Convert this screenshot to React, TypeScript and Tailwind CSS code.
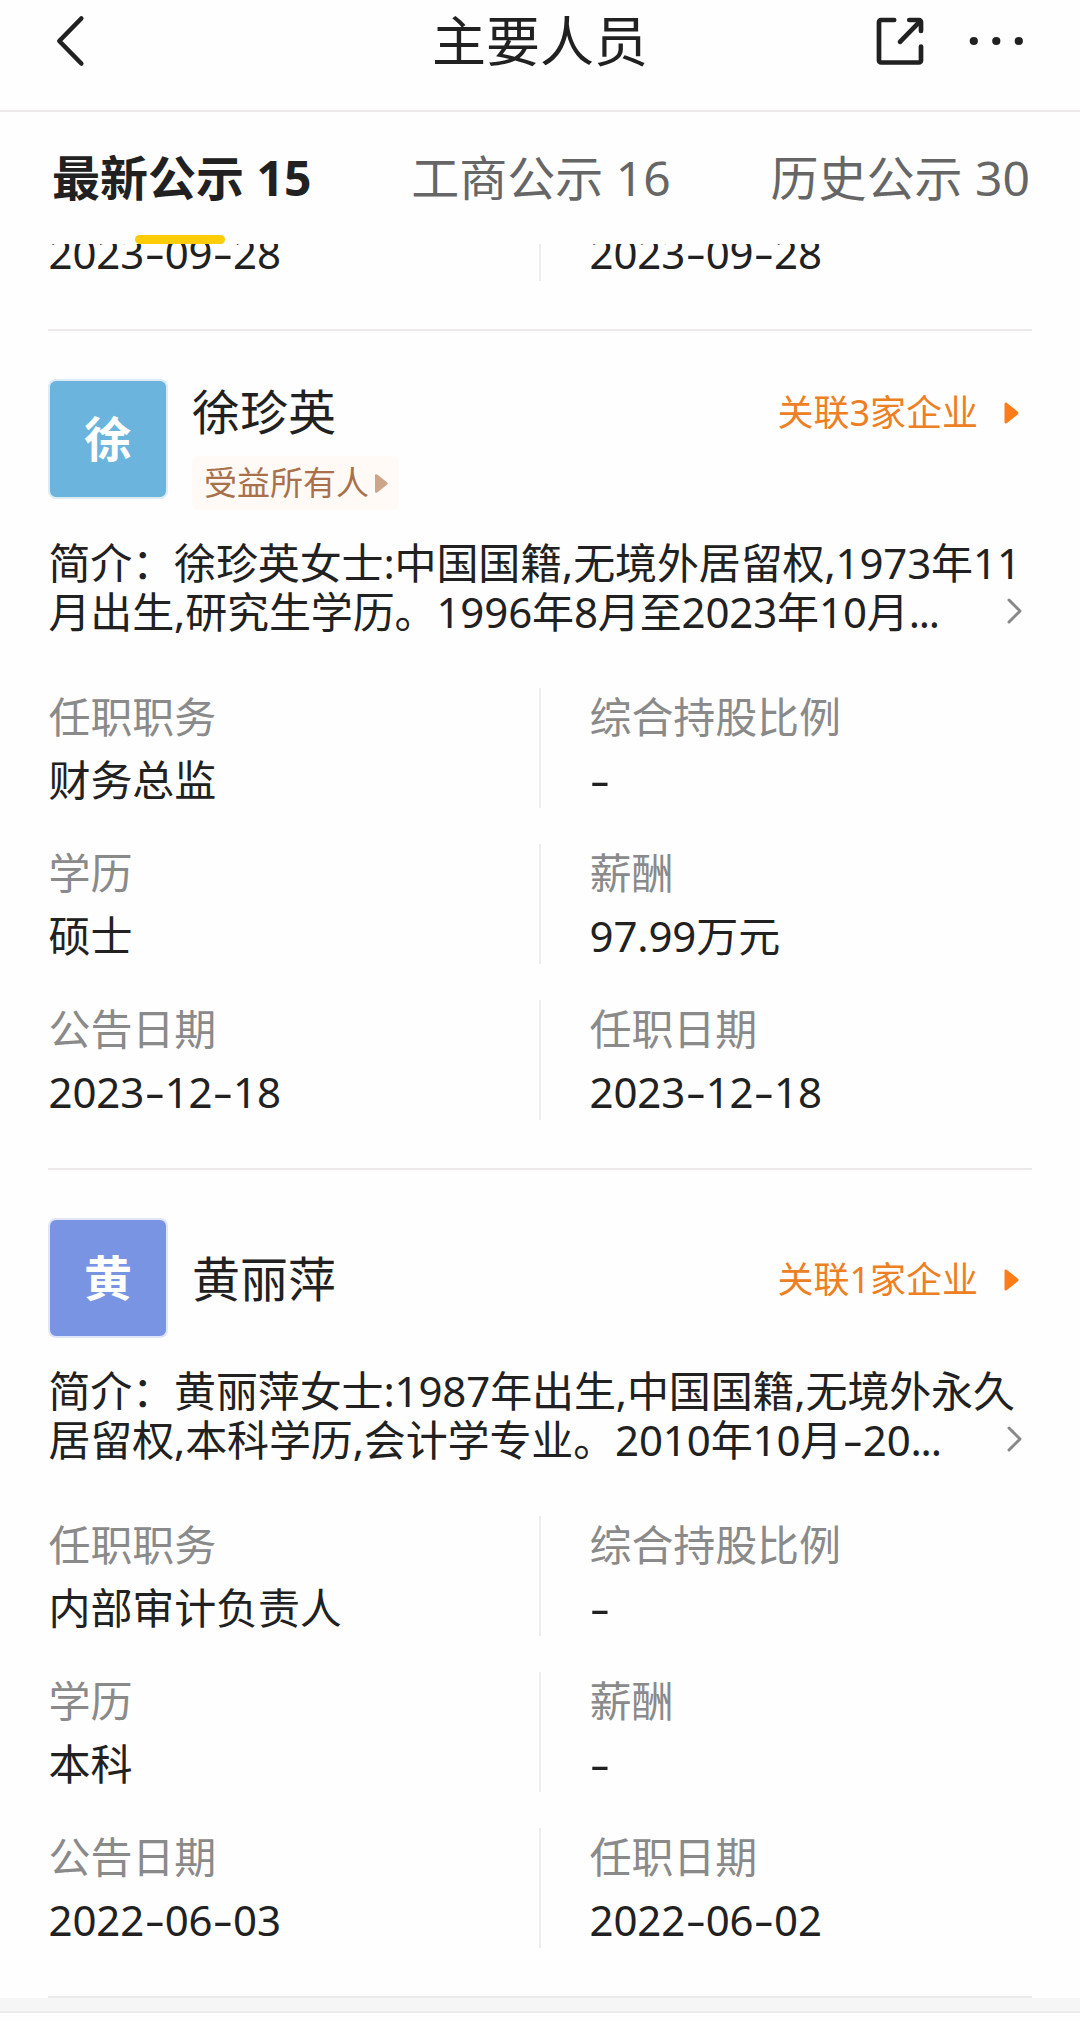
import { Fragment } from "react";

type Field = { label: string; value: string };

type Person = {
  name: string;
  avatar: string;
  tag?: string;
  link: string;
  intro: [string, string];
  rows: [Field, Field][];
};

const tabs = [
  { text: "最新公示 15", active: true },
  { text: "工商公示 16", active: false },
  { text: "历史公示 30", active: false },
];

const people: Person[] = [
  {
    name: "徐珍英",
    avatar: "bg-[#6ab4dd] border-[#dcebf5]",
    tag: "受益所有人",
    link: "关联3家企业",
    intro: [
      "简介：徐珍英女士:中国国籍,无境外居留权,1973年11",
      "月出生,研究生学历。1996年8月至2023年10月...",
    ],
    rows: [
      [
        { label: "任职职务", value: "财务总监" },
        { label: "综合持股比例", value: "-" },
      ],
      [
        { label: "学历", value: "硕士" },
        { label: "薪酬", value: "97.99万元" },
      ],
      [
        { label: "公告日期", value: "2023-12-18" },
        { label: "任职日期", value: "2023-12-18" },
      ],
    ],
  },
  {
    name: "黄丽萍",
    avatar: "bg-[#7a94e4] border-[#e0e6f8]",
    link: "关联1家企业",
    intro: [
      "简介：黄丽萍女士:1987年出生,中国国籍,无境外永久",
      "居留权,本科学历,会计学专业。2010年10月-20...",
    ],
    rows: [
      [
        { label: "任职职务", value: "内部审计负责人" },
        { label: "综合持股比例", value: "-" },
      ],
      [
        { label: "学历", value: "本科" },
        { label: "薪酬", value: "-" },
      ],
      [
        { label: "公告日期", value: "2022-06-03" },
        { label: "任职日期", value: "2022-06-02" },
      ],
    ],
  },
];

/* Text whose hyphens are drawn about half an em wide. */
function Wide({ text }: { text: string }) {
  const parts = text.split("-");
  return (
    <>
      {parts.map((part, i) => (
        <Fragment key={i}>
          {i > 0 && (
            <span className="inline-block w-[0.49em] text-center">
              <span className="inline-block scale-x-150">-</span>
            </span>
          )}
          {part}
        </Fragment>
      ))}
    </>
  );
}

function Cell({ field }: { field: Field }) {
  return (
    <div className="flex flex-col gap-[7px] pt-px pl-[0.5px] text-[42px] leading-[56px] tracking-[-0.12px] whitespace-nowrap">
      <div className="text-[#8a8a8a]">{field.label}</div>
      <div>
        <Wide text={field.value} />
      </div>
    </div>
  );
}

function Rule() {
  return <div className="mx-12 h-0.5 shrink-0 bg-[#ebe9ea]" />;
}

function PersonCard({ person }: { person: Person }) {
  return (
    <section className="flex flex-col px-12 pt-12 pb-12">
      <div className="flex justify-between">
        <div className="flex">
          <div
            className={`flex size-[120px] items-center justify-center rounded-lg border-2 text-[48px] font-bold text-white ${person.avatar}`}
          >
            {person.name[0]}
          </div>
          <div className={`ml-6 flex flex-col items-start ${person.tag ? "" : "justify-center"}`}>
            <div className="mt-px h-16 text-[48px] leading-[64px]">{person.name}</div>
            {person.tag && (
              <div className="mt-3 flex h-[54px] items-center gap-[6px] rounded-md bg-[#fffaf5] pr-[11px] pl-3 text-[33px] leading-[54px] text-[#a9714b]">
                {person.tag}
                <svg className="h-[19px] w-[13px]" viewBox="0 0 13 19" fill="#cda58a">
                  <path d="M0 1.6C0 .3 1.2-.2 2.2.6l9.8 7.7c.9.7.9 1.7 0 2.4l-9.800 7.700C1.200 19.200 0 18.700 0 17.400Z" />
                </svg>
              </div>
            )}
          </div>
        </div>
        <div
          className={`flex items-center pr-[13px] text-[36px] leading-[64px] text-[#ed8022] ${person.tag ? "mt-0.5 h-16" : "pt-[3px]"}`}
        >
          {person.link}
          <svg className="ml-[26px] h-[22px] w-[15px]" viewBox="0 0 15 22" fill="#ff7d18">
            <path d="M0.500 2C.5.500 1.900 0 3 .9l10.700 8.600c1 .8 1 2.200 0 3L3 21.100C1.900 22 .5 21.500.5 20Z" />
          </svg>
        </div>
      </div>

      <div className="mt-7 flex items-end justify-between pl-[0.5px] text-[42px] leading-[49px] tracking-[-0.13px] whitespace-nowrap">
        <div className="w-0 grow">
          <div>{person.intro[0]}</div>
          <div>
            <Wide text={person.intro[1].slice(0, -3)} />
            <span className="tracking-[-1.2px]">...</span>
          </div>
        </div>
        <svg
          className="mr-[9px] mb-3 h-[26px] w-4"
          viewBox="0 0 16 26"
          fill="none"
          stroke="#888888"
          strokeWidth="3"
          strokeLinecap="round"
          strokeLinejoin="round"
        >
          <path d="M2 2 13 13 2 24" />
        </svg>
      </div>

      <div className="mt-[52px] flex flex-col gap-9">
        {person.rows.map(([left, right], i) => (
          <div key={i} className="grid h-[120px] grid-cols-[491px_1fr]">
            <Cell field={left} />
            <div className="border-l-2 border-[#ededee] pl-12">
              <Cell field={right} />
            </div>
          </div>
        ))}
      </div>
    </section>
  );
}

export default function App() {
  return (
    <div className="flex h-[2021px] w-[1080px] flex-col overflow-hidden bg-[#fefefe] font-['Noto_Sans','Noto_Sans_CJK_SC',sans-serif] text-[#212121]">
      <header className="grid h-[112px] shrink-0 grid-cols-3 items-start border-b-2 border-[#ebe9ea] px-14">
        <svg
          className="mt-[14px] h-[54px] w-[30px]"
          viewBox="0 0 30 54"
          fill="none"
          stroke="#212121"
          strokeWidth="4.6"
          strokeLinecap="round"
          strokeLinejoin="round"
        >
          <path d="M25.300 4.500 3.300 27l22 22.500" />
        </svg>
        <h1 className="text-center text-[54px] leading-[82px]">主要人员</h1>
        <div className="mt-[17px] flex items-center justify-end gap-[45px]">
          <svg
            className="size-12"
            viewBox="0 0 48 48"
            fill="none"
            stroke="#212121"
            strokeWidth="4.700"
            strokeLinecap="round"
            strokeLinejoin="round"
          >
            <path d="M18.200 3H5a2 2 0 0 0-2 2v38.500a2 2 0 0 0 2 2h38a2 2 0 0 0 2-2V29.600" />
            <path d="M33.300 3H43a2 2 0 0 1 2 2v9" />
            <path d="M43.500 4.800 24 24.800" />
          </svg>
          <svg className="h-3 w-[55px]" viewBox="0 0 55 12" fill="#212121">
            <circle cx="4.800" cy="6" r="4.100" />
            <circle cx="27.300" cy="6" r="4.100" />
            <circle cx="49.800" cy="6" r="4.100" />
          </svg>
        </div>
      </header>

      <nav className="flex h-[132px] shrink-0 justify-between pr-[50px] pl-[52px] text-[48px] leading-[132px] whitespace-nowrap">
        {tabs.map((tab) => (
          <div
            key={tab.text}
            className={`relative ${tab.active ? "font-bold" : "text-[#666666]"}`}
          >
            {tab.text}
            {tab.active && (
              <span className="absolute bottom-0 left-[83px] h-[9px] w-[90px] rounded-full bg-[#ffcc08]" />
            )}
          </div>
        ))}
      </nav>

      {/* Last row of the previous card, scrolled partly under the tabs */}
      <div className="mx-12 mb-12 grid h-[37px] shrink-0 grid-cols-[491px_1fr] grid-rows-[37px] items-end overflow-hidden text-[42px] leading-[56px] tracking-[-0.12px]">
        <div className="pl-[0.5px]">
          <Wide text="2023-09-28" />
        </div>
        <div className="border-l-2 border-[#ededee] pl-[48.5px]">
          <Wide text="2023-09-28" />
        </div>
      </div>
      <Rule />

      {people.map((person) => (
        <Fragment key={person.name}>
          <PersonCard person={person} />
          <Rule />
        </Fragment>
      ))}

      <div className="h-[15px] shrink-0 border-b-2 border-[#ebebeb] bg-[#f6f6f6]" />
    </div>
  );
}
